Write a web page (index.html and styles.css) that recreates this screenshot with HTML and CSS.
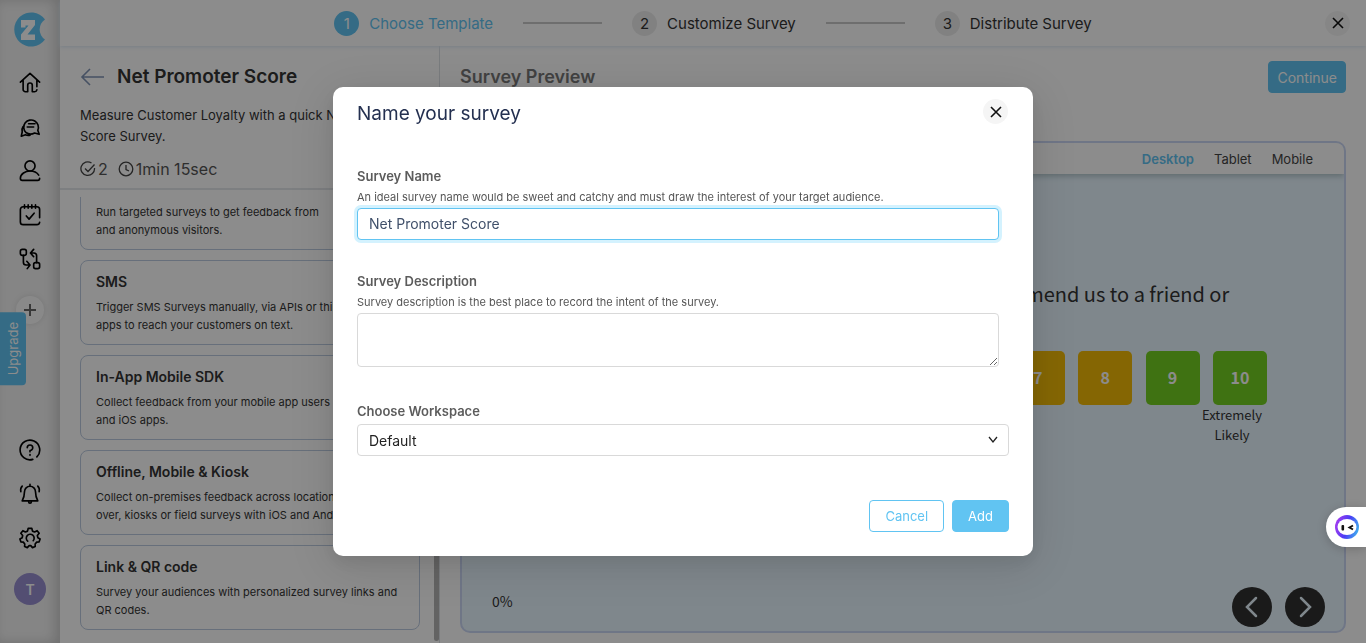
FILE: index.html
```html
<!DOCTYPE html>
<html lang="en">
<head>
<meta charset="utf-8">
<title>Name your survey</title>
<link rel="stylesheet" href="styles.css">
</head>
<body>
<div class="app">
  <aside class="sidebar">
    <a class="logo" href="#" aria-label="Home page">
      <svg width="32" height="36" viewBox="0 0 32 36"><path d="M31 8.500A17 17 0 1 0 31 28.500A12 12 0 0 1 31 8.500Z" fill="#61c4f2"/><path d="M7 9H21V14L13.500 23.500H21V29H7V23.500L14.500 14.500H11.500V16.500H7Z" fill="#fff"/></svg>
    </a>
    <nav class="side-nav">
      <a href="#" class="side-link" aria-label="Dashboard"><svg class="icon" viewBox="0 0 24 24"><path d="M1.500 11 12 1.500l10.500 9.500M4.500 9v10a2.500 2.500 0 0 0 2.500 2.500h2.500v-7a2.500 2.500 0 0 1 5 0v7H17a2.500 2.500 0 0 0 2.500-2M19.500 9v7"/></svg></a>
      <a href="#" class="side-link" aria-label="Conversations"><svg class="icon" viewBox="0 0 24 24"><path d="M7.500 18A8 8 0 1 1 20.500 15.500L22 20l-5-1.500a9 9 0 0 1-9.500-.5ZM10.500 8.500h7M9 12h7M4.500 11.500a7 7 0 0 0-1 6L2.500 22l4.500-1.500a8 8 0 0 0 5 .5"/></svg></a>
      <a href="#" class="side-link" aria-label="Contacts"><svg class="icon" viewBox="0 0 24 24"><circle cx="12" cy="6.500" r="5.500"/><path d="M21.500 16.500c-2-3-5.500-4.500-9.500-4.500-5 0-10.500 3-10.500 8 0 1.500.8 2.300 2 2.300h17c1.200 0 2-.8 2-2.300"/></svg></a>
      <a href="#" class="side-link" aria-label="Tasks"><svg class="icon" viewBox="0 0 24 24"><path d="M22.500 15V6a3 3 0 0 0-3-3h-15a3 3 0 0 0-3 3v13.500a3 3 0 0 0 3 3h15a3 3 0 0 0 3-2.500M6 1v3.500M10 1v3.500M14 1v3.500M18 1v3.500M8 13l3 3.500 5.500-6.500"/></svg></a>
      <a href="#" class="side-link" aria-label="Workflows"><svg class="icon" viewBox="0 0 24 24"><rect x="1.500" y="1.500" width="6.500" height="6.500" rx="2"/><rect x="16" y="16" width="6.500" height="6.500" rx="2"/><path d="M4.800 8v7.500a3 3 0 0 0 3 3H11M8.500 14.500l3.500 4-3 4M19.200 16V8.500a3 3 0 0 0-3-3H13M16 1.500l-3.500 4 3.500 4"/></svg></a>
    </nav>
    <button class="add-button" type="button" aria-label="Create"><svg width="14" height="14" viewBox="0 0 14 14"><path d="M7 1v12M1 7h12" stroke="#666" stroke-width="2"/></svg></button>
    <nav class="side-nav side-nav-bottom">
      <a href="#" class="side-link" aria-label="Help"><svg class="icon" viewBox="0 0 24 24"><path d="M15 22.200A10.700 10.700 0 1 1 19.500 19.500M9 9.500A3 3 0 1 1 12 12.500V14M12 17v.8"/></svg></a>
      <a href="#" class="side-link" aria-label="Notifications"><svg class="icon" viewBox="0 0 24 24"><path d="M12 3.500a6 6 0 0 1 6 6c0 5 1 7 2.500 10h-17C5 16.500 6 14.500 6 9.500a6 6 0 0 1 6-6ZM12 1.500v2M10.500 20.500c0 2 3 2 3 0M2 9.500C1.500 7 2 5 3.500 3.500M22 9.500c.5-2.500 0-4.500-1.500-6"/></svg></a>
      <a href="#" class="side-link" aria-label="Settings"><svg class="icon" viewBox="0 0 24 24"><path d="M10 1.500h4l.7 3 2.300 1 2.800-1.500 2.200 2.800L20 9.300l.6 2.400 2.400 1.300-1 3.200-2.700.3-1.700 2 .1 2.700-3 1.300-1.900-2.200h-1.700l-2 2.200-3-1.300.2-2.700-1.600-2-2.700-.3-1-3.200 2.500-1.300.5-2.400L2 6.800 4.200 4 7 5.500l2.300-1Z"/><path d="M9.500 15.500A4.300 4.300 0 1 1 15.500 15"/></svg></a>
    </nav>
    <span class="avatar">T</span>
  </aside>

  <div class="main">
    <header class="topbar">
      <ol class="steps">
        <li class="step step-active"><span class="step-number">1</span>Choose Template</li>
        <li class="step-line" aria-hidden="true"></li>
        <li class="step"><span class="step-number">2</span>Customize Survey</li>
        <li class="step-line" aria-hidden="true"></li>
        <li class="step"><span class="step-number">3</span>Distribute Survey</li>
      </ol>
      <button class="close-button topbar-close" type="button" aria-label="Close"><svg width="12" height="12" viewBox="0 0 12 12"><path d="M1 1l10 10M11 1 1 11" stroke="#111" stroke-width="1.600"/></svg></button>
    </header>

    <div class="columns">
      <section class="templates">
        <div class="template-head">
          <div class="template-title">
            <a href="#" aria-label="Back"><svg width="25" height="18" viewBox="0 0 25 18"><path d="M10 1 2 9l8 8M2 9h22" fill="none" stroke="#8094b4" stroke-width="1.600"/></svg></a>
            <h1>Net Promoter Score</h1>
          </div>
          <p class="template-text">Measure Customer Loyalty with a quick Net<br>Score Survey.</p>
          <div class="template-meta">
            <svg width="16" height="16" viewBox="0 0 16 16"><path d="M14.500 7a6.800 6.800 0 1 1-3-5M5 7.500l3 3L14.500 3.500" fill="none" stroke="#444" stroke-width="1.300"/></svg>
            <span class="meta-item">2</span>
            <svg width="16" height="16" viewBox="0 0 16 16"><circle cx="8" cy="8" r="6.800" fill="none" stroke="#444" stroke-width="1.300"/><path d="M8 4v4.500l3 1.500" fill="none" stroke="#444" stroke-width="1.300"/></svg>
            <span>1min 15sec</span>
          </div>
        </div>
        <div class="channel-list">
          <article class="channel"><p>Run targeted surveys to get feedback from<br>and anonymous visitors.</p></article>
          <article class="channel"><h2>SMS</h2><p>Trigger SMS Surveys manually, via APIs or third<br>apps to reach your customers on text.</p></article>
          <article class="channel"><h2>In-App Mobile SDK</h2><p>Collect feedback from your mobile app users<br>and iOS apps.</p></article>
          <article class="channel"><h2>Offline, Mobile &amp; Kiosk</h2><p>Collect on-premises feedback across locations<br>over, kiosks or field surveys with iOS and Android</p></article>
          <article class="channel"><h2>Link &amp; QR code</h2><p>Survey your audiences with personalized survey links and<br>QR codes.</p></article>
          <span class="scroll-thumb"></span>
        </div>
      </section>

      <section class="preview">
        <div class="preview-head">
          <h2>Survey Preview</h2>
          <button class="button button-primary button-continue" type="button">Continue</button>
        </div>
        <div class="frame">
          <div class="tabs">
            <button type="button" class="tab tab-active">Desktop</button>
            <button type="button" class="tab">Tablet</button>
            <button type="button" class="tab">Mobile</button>
          </div>
          <div class="survey">
            <p class="question">On a scale of 0 to 10, how likely are you to recommend us to a friend or colleague?</p>
            <div class="scale">
              <button type="button" class="score low">0</button><button type="button" class="score low">1</button><button type="button" class="score low">2</button><button type="button" class="score low">3</button><button type="button" class="score low">4</button><button type="button" class="score low">5</button><button type="button" class="score low">6</button><button type="button" class="score mid">7</button><button type="button" class="score mid">8</button><button type="button" class="score high">9</button><button type="button" class="score high">10</button>
            </div>
            <p class="scale-label">Extremely Likely</p>
            <div class="survey-foot">
              <span>0%</span>
              <div class="pager">
                <button type="button" class="round" aria-label="Previous"><svg width="14" height="22" viewBox="0 0 14 22"><path d="M11 2 2 11l9 9" class="chevron"/></svg></button>
                <button type="button" class="round" aria-label="Next"><svg width="14" height="22" viewBox="0 0 14 22"><path d="m3 2 9 9-9 9" class="chevron"/></svg></button>
              </div>
            </div>
          </div>
        </div>
      </section>
    </div>
  </div>
  <button class="upgrade" type="button">Upgrade</button>
</div>

<div class="overlay">
  <form class="modal" role="dialog" aria-labelledby="modal-title">
    <div class="modal-head">
      <h2 id="modal-title">Name your survey</h2>
      <button class="close-button" type="button" aria-label="Close dialog"><svg width="12" height="12" viewBox="0 0 12 12"><path d="M1 1l10 10M11 1 1 11" stroke="#111" stroke-width="1.600"/></svg></button>
    </div>
    <div class="field">
      <label for="survey-name">Survey Name</label>
      <p class="hint">An ideal survey name would be sweet and catchy and must draw the interest of your target audience.</p>
      <input id="survey-name" class="control control-focus" type="text" value="Net Promoter Score">
    </div>
    <div class="field field-area">
      <label for="survey-description">Survey Description</label>
      <p class="hint">Survey description is the best place to record the intent of the survey.</p>
      <textarea id="survey-description" class="control control-area"></textarea>
    </div>
    <div class="field field-wide">
      <label for="workspace">Choose Workspace</label>
      <div class="select-wrap">
        <select id="workspace" class="control control-select"><option>Default</option></select>
        <svg class="select-arrow" width="10" height="8" viewBox="0 0 10 8"><path d="M1 1l4 5 4-5" fill="none" stroke="#222" stroke-width="1.300"/></svg>
      </div>
    </div>
    <div class="actions">
      <button class="button button-outline" type="button">Cancel</button>
      <button class="button button-primary" type="submit">Add</button>
    </div>
  </form>
</div>

<button class="assistant" type="button" aria-label="Assistant">
  <svg width="24" height="24" viewBox="0 0 24 24">
    <defs><linearGradient id="ring" x1="0" y1="0.400" x2="1" y2="0.700"><stop offset="0" stop-color="#a23cf0"/><stop offset="0.500" stop-color="#4a3df5"/><stop offset="1" stop-color="#3fb4ee"/></linearGradient></defs>
    <circle cx="12" cy="12" r="12" fill="url(#ring)"/><ellipse cx="12" cy="12" rx="9.500" ry="8" fill="#fff"/>
    <rect x="6.500" y="10" width="2.600" height="5.500" rx="1" fill="#111"/><path d="M18 10.500l-3.500 2 3.500 2" fill="none" stroke="#111" stroke-width="2"/>
  </svg>
</button>
</body>
</html>
```
FILE: styles.css
```css
* { box-sizing: border-box; }
body { margin: 0; font-family: Inter, "Liberation Sans", sans-serif; font-size: 14px; color: #333; }
h1, h2, p, ol { margin: 0; padding: 0; }
button, input, textarea, select { font: inherit; }
button { border: 0; padding: 0; cursor: pointer; }

.app { display: flex; height: 100vh; background: #fff; overflow: hidden; }

.sidebar { width: 60px; flex: none; display: flex; flex-direction: column; align-items: center; padding: 11px 0 38px; background: #f2f2f2; box-shadow: inset -5px 0 12px rgba(0, 0, 0, .16); }
.logo { height: 36px; }
.side-nav { display: flex; flex-direction: column; gap: 20px; margin-top: 24px; }
.side-link { display: block; height: 24px; }
.icon { width: 24px; height: 24px; padding: 1px; fill: none; stroke: #000; stroke-width: 1.8; stroke-linecap: round; stroke-linejoin: round; }
.add-button { display: grid; place-items: center; width: 28px; height: 28px; margin-top: 25px; border-radius: 50%; background: #fafafa; box-shadow: 0 0 6px rgba(0, 0, 0, .1); }
.side-nav-bottom { margin-top: auto; }
.avatar { display: grid; place-items: center; width: 32px; height: 32px; margin-top: 23px; border-radius: 50%; background: #978ed0; color: #fff; font-weight: 600; }
.upgrade { position: absolute; left: 0; top: 312px; padding: 10px 4px; writing-mode: vertical-rl; rotate: 180deg; line-height: 18px; font-size: 13px; color: #fff; background: #61c4f2; border-radius: 4px 0 0 4px; }

.main { flex: 1; min-width: 0; display: flex; flex-direction: column; }
.topbar { position: relative; display: flex; align-items: center; justify-content: center; height: 46px; flex: none; box-shadow: 0 1px 4px #dbe8f4; }
.steps { display: flex; align-items: center; gap: 30px; list-style: none; font-size: 15px; }
.step { display: flex; align-items: center; gap: 10px; }
.step-number { display: grid; place-items: center; width: 25px; height: 25px; border-radius: 50%; background: #ececec; }
.step-active { color: #61c4f2; }
.step-active .step-number { background: #61c4f2; color: #fff; }
.step-line { width: 79px; height: 2px; background: #c8c8c8; }
.close-button { display: grid; place-items: center; width: 25px; height: 25px; border-radius: 50%; background: #f5f5f5; }
.topbar-close { position: absolute; right: 16px; }

.columns { flex: 1; min-height: 0; display: flex; }
.templates { width: 380px; flex: none; display: flex; flex-direction: column; border-right: 1px solid #dde1e6; }
.template-head { padding: 19px 20px 9px; border-bottom: 2px solid #e4e7eb; white-space: nowrap; }
.template-title { display: flex; align-items: center; gap: 12px; }
.template-title a { display: flex; }
h1 { font-size: 19px; line-height: 24px; font-weight: 600; }
.template-text { margin-top: 16px; font-size: 13px; line-height: 21px; }
.template-meta { display: flex; align-items: center; gap: 2px; margin-top: 12px; font-size: 16px; line-height: 20px; color: #555; }
.meta-item { margin-right: 8px; }
.channel-list { position: relative; flex: 1; min-height: 0; display: flex; flex-direction: column; justify-content: flex-end; gap: 10px; margin-top: 7px; padding: 0 19px 13px 20px; overflow: hidden; }
.channel { flex: none; min-height: 85px; display: flex; flex-direction: column; justify-content: flex-end; gap: 4px; padding: 9px 15px 10px; border: 1px solid #bccbe0; border-radius: 8px; overflow: hidden; white-space: nowrap; }
.channel h2 { font-size: 14px; line-height: 24px; font-weight: 600; }
.channel p { font-size: 11px; line-height: 18px; }
.scroll-thumb { position: absolute; right: 0; top: 0; bottom: 2px; width: 5px; border-radius: 3px; background: #b5b5b5; }

.preview { flex: 1; min-width: 0; display: flex; flex-direction: column; padding: 15px 20px 10px; }
.preview-head { display: flex; justify-content: space-between; align-items: center; color: #777; }
.preview-head h2 { font-size: 18px; line-height: 24px; font-weight: 600; }
.frame { flex: 1; min-height: 0; display: flex; flex-direction: column; margin-top: 48px; border: 2px solid #cbd7f5; border-radius: 10px; overflow: hidden; background: #e8f6ff; }
.tabs { flex: none; display: flex; justify-content: flex-end; gap: 20px; padding: 0 31px; background: #fff; box-shadow: 0 2px 6px rgba(80, 110, 110, .4); }
.tab { height: 31px; background: none; color: #444; font-size: 13px; }
.tab-active { color: #61c4f2; font-weight: 600; }
.survey { flex: 1; display: flex; flex-direction: column; align-items: center; padding-top: 105px; font-family: "Noto Sans CJK SC", "Noto Sans", sans-serif; }
.question { width: 660px; font-size: 20px; line-height: 30px; text-align: center; }
.scale { display: flex; justify-content: space-between; width: 728px; margin-top: 12px; }
.score { width: 54px; height: 54px; padding-bottom: 3px; border-radius: 5px; color: #fff; font-size: 16px; font-weight: 700; }
.low { background: #f26b5b; }
.mid { background: #f2bb07; }
.high { background: #74d022; }
.scale-label { width: 728px; padding-left: 658px; font-size: 13px; line-height: 20px; text-align: center; }
.survey-foot { align-self: stretch; display: flex; justify-content: space-between; align-items: center; margin-top: auto; padding: 0 19px 4px 30px; }
.survey-foot span { margin-bottom: 13px; }
.pager { display: flex; gap: 13px; }
.round { display: grid; place-items: center; width: 40px; height: 40px; border-radius: 50%; background: #303030; }
.chevron { fill: none; stroke: #e8f6ff; stroke-width: 2.5; stroke-linecap: round; }

.overlay { position: fixed; inset: 0; display: grid; place-items: center; background: rgba(0, 0, 0, .45); }
.modal { width: 700px; padding: 12px 24px 24px; border-radius: 10px; background: #fff; box-shadow: 0 6px 16px rgba(0, 0, 0, .08), 0 9px 48px 8px rgba(0, 0, 0, .1); }
.modal-head { display: flex; justify-content: space-between; align-items: flex-start; margin-bottom: 36px; padding-right: 1px; }
.modal-head h2 { font-size: 19px; line-height: 30px; font-weight: 400; color: #243050; }
.field { margin-bottom: 30px; padding-right: 10px; }
.field-area { margin-bottom: 33px; }
.field-wide { padding-right: 0; }
.field label { display: block; font-size: 13px; font-weight: 600; line-height: 22px; color: #5c5c5c; }
.hint { font-size: 11px; line-height: 21px; color: #555; }
.control { display: block; width: 100%; height: 32px; padding: 0 11px; border: 1px solid #d9d9d9; border-radius: 4px; background: #fff; color: #40506a; outline: 0; }
.control-focus { padding-bottom: 2px; border-color: #61c4f2; box-shadow: 0 0 0 3px #d4f2fe; }
.control-area { height: 54px; resize: vertical; }
.select-wrap { position: relative; margin-top: 2px; }
.control-select { appearance: none; color: #222; }
.select-arrow { position: absolute; right: 11px; top: 12px; pointer-events: none; }
.actions { display: flex; justify-content: flex-end; gap: 8px; margin-top: 44px; }
.button { height: 32px; padding: 0 15px; border: 1px solid #61c4f2; border-radius: 4px; font-size: 13px; }
.button-primary { background: #61c4f2; color: #fff; }
.button-outline { background: #fff; color: #61c4f2; }
.button-continue { padding: 0 8px; font-size: 14px; }

.assistant { position: fixed; right: 0; top: 507px; width: 40px; height: 40px; padding-left: 9px; display: flex; align-items: center; border-radius: 20px 0 0 20px; background: #fff; box-shadow: 0 2px 12px rgba(0, 0, 0, .2); }
```
